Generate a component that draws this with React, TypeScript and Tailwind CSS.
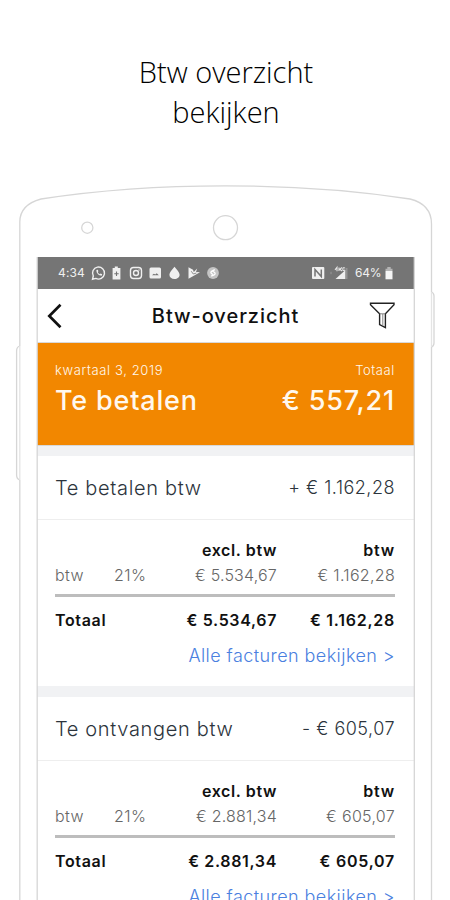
import React from 'react';

const sections = [
  {
    title: 'Te betalen btw',
    amount: '+ € 1.162,28',
    rate: '21%',
    excl: '€ 5.534,67',
    btw: '€ 1.162,28',
  },
  {
    title: 'Te ontvangen btw',
    amount: '- € 605,07',
    rate: '21%',
    excl: '€ 2.881,34',
    btw: '€ 605,07',
  },
];

const PhoneFrame = () => (
  <svg className="absolute left-0 top-0 pointer-events-none" width="450" height="900" fill="none" stroke="#d6d6d6" strokeWidth="1.3">
    <path d="M19.8 900V480M19.8 346V222C19.8 209 30 202 41 199C155 181.5 295 181.5 410 199C422 202 431.5 209 431.5 224V292M431.5 347V900" />
    <path d="M19.8 346Q16.6 347 16.6 351V475Q16.6 479 19.8 480" />
    <path d="M431.5 292Q434 293 434 296V343Q434 346 431.5 347" />
    <path d="M19.8 346V480M431.5 292V347" stroke="#e4e4e4" />
    <circle cx="87.3" cy="227.7" r="5.6" />
    <circle cx="225.5" cy="227.7" r="12" />
    <path d="M37.2 257V900M414.3 257V900" />
  </svg>
);

const StatusBar = () => (
  <div className="flex h-8 items-center justify-between bg-[#757575] pl-[21px] pr-[21px] text-[12px] text-[#f0f0f0]">
    <div className="flex items-center">
      <span className="w-[33px] tracking-[0.15px] whitespace-nowrap">4:34</span>
      <svg width="130" height="16" viewBox="0 0 130 16" fill="none" stroke="#f0f0f0" strokeWidth="1.4">
        {/* whatsapp */}
        <path d="M1.5 14.3L2.3 11A6 6 0 1 1 4.8 13.4Z" />
        <path d="M5.4 5C5.2 8 7.6 10.7 10.7 10.7L11.2 9.3L9.6 8.4L8.8 9.2C7.8 8.8 7 7.9 6.8 7L7.4 6.3L6.8 4.7Z" fill="#f0f0f0" stroke="none" />
        {/* battery saver */}
        <path d="M21.6 3H23.8V1.5H26.8V3H29.4V14.5H21.6Z" fill="#f0f0f0" stroke="none" />
        <path d="M23.3 8.8H27.7M25.5 6.6V11" stroke="#757575" strokeWidth="1.1" />
        {/* instagram */}
        <rect x="39.5" y="2.5" width="11" height="11" rx="3" />
        <circle cx="45" cy="8" r="2.5" />
        <circle cx="48" cy="5" r="0.7" fill="#f0f0f0" stroke="none" />
        {/* image */}
        <rect x="58.5" y="2.5" width="11.5" height="11" rx="1.5" fill="#f0f0f0" stroke="none" />
        <path d="M61 10.3H67.8L65.7 8.2L64.3 9.4L62.8 8.8Z" fill="#757575" stroke="none" />
        {/* drop */}
        <path d="M83.5 1.8C81 5 78.4 7.4 78.4 9.8C78.4 12.4 80.6 14 83.5 14S88.6 12.4 88.6 9.8C88.6 7.4 86 5 83.5 1.8Z" fill="#f0f0f0" stroke="none" />
        {/* play */}
        <path d="M97.5 2.2L102 4.8L102.8 7L106.2 3.6L105 7L109 7.2L97.5 13.8Z" fill="#f0f0f0" stroke="none" />
        <path d="M100.2 6.2L102.3 9L105.4 8" stroke="#757575" strokeWidth="0.8" />
        {/* shazam */}
        <circle cx="122" cy="8" r="5.9" fill="#c4c4c4" stroke="none" />
        <path d="M123.8 4.7L121 6.1Q119 7.4 120.6 8.6L122 9.5M120.2 11.2L123 9.9Q125 8.5 123.4 7.3L122 6.5" stroke="#fff" strokeWidth="1.3" />
      </svg>
    </div>
    <div className="flex items-center">
      <svg width="39" height="16" viewBox="0 0 39 16" className="mr-[5px]">
        <rect x="1" y="2" width="12.3" height="12" rx="1" fill="#f0f0f0" />
        <path d="M4 11.5V4.5L10.3 11.5V4.5" fill="none" stroke="#757575" strokeWidth="1.5" />
        <path d="M20 6.8V9.2" stroke="#999" />
        <path d="M24.5 14L34.5 5V14Z" fill="#f0f0f0" />
        <path d="M34.5 3H36.5V14H34.5Z" fill="#949494" />
        <path d="M24 4.8L26 2.3V6.2M28 2.5V6M31 2.5L28.8 4.2L31 6M34 3Q31.8 2 31.8 4.2T34 5" fill="none" stroke="#e5e5e5" strokeWidth="1.1" />
      </svg>
      <span className="w-[28px] tracking-[-0.2px] whitespace-nowrap">64%</span>
      <svg width="8" height="14" viewBox="0 0 8 14" className="ml-[2px]">
        <path d="M2.3 1H5.7V2.7H7.5V5H0.5V2.7H2.3Z" fill="#b4b4b4" />
        <path d="M0.5 5H7.5V13.3H0.5Z" fill="#f5f5f5" />
      </svg>
    </div>
  </div>
);

const BtwSection = ({ section }: { section: (typeof sections)[number] }) => (
  <section className="border-b-[11px] border-[#f1f2f4] bg-white">
    <div className="flex h-16 items-center justify-between border-b border-[#eeeeee] pl-[18px] pr-[19px] text-[#2c343c]">
      <h2 className="pt-px text-[20px] font-light tracking-[0.66px]">{section.title}</h2>
      <span className="text-[18px] font-light tracking-[0.5px]">{section.amount}</span>
    </div>

    <div className="h-[166px] pl-[18px] pr-[19px] pt-[18px] text-[16px]">
      <div className="grid grid-cols-[59px_71px_92px_118px] leading-[25px]">
        <span className="col-span-3 text-right font-semibold tracking-[0.6px] text-[#111]">excl. btw</span>
        <span className="text-right font-semibold tracking-[0.8px] text-[#111]">btw</span>
        <span className="font-light tracking-[0.4px] text-[#666]">btw</span>
        <span className="font-light tracking-[0.4px] text-[#666]">{section.rate}</span>
        <span className="text-right font-light tracking-[0.2px] text-[#666]">{section.excl}</span>
        <span className="text-right font-light tracking-[0.3px] text-[#666]">{section.btw}</span>
      </div>
      <div className="mt-[6px] h-[3px] bg-[#bdbdbd]" />
      <div className="mt-[10px] grid grid-cols-[130px_92px_118px] font-semibold leading-[26px] tracking-[0.65px] text-[#111]">
        <span>Totaal</span>
        <span className="text-right">{section.excl}</span>
        <span className="text-right tracking-[0.75px]">{section.btw}</span>
      </div>
      <div className="mt-[10px] text-right text-[18px] font-light leading-[26px] tracking-[0.43px] text-[#4a80e0]">
        Alle facturen bekijken &gt;
      </div>
    </div>
  </section>
);

const App = () => {
  return (
    <div className="relative h-[900px] w-[450px] overflow-hidden bg-white font-['Inter',sans-serif]">
      <h1 className="h-[257px] pl-[2px] pt-[52px] text-center font-['Open_Sans',sans-serif] text-[29px] font-light leading-10 text-black">
        Btw overzicht
        <br />
        bekijken
      </h1>

      <main className="ml-[37px] w-[377px]">
        <StatusBar />

        <header className="grid h-[54px] grid-cols-[60px_1fr_60px] items-center border-b border-[#d9d9d9]">
          <svg width="24" height="30" viewBox="0 0 24 30" className="ml-[8px]" fill="none" stroke="#111" strokeWidth="2.7">
            <path d="M15.5 3.8L4.3 15L15.5 26.2" />
          </svg>
          <div className="pt-px text-center text-[20px] font-medium tracking-[0.95px] text-[#111]">Btw-overzicht</div>
          <svg width="28" height="30" viewBox="0 0 28 30" className="ml-[14px]" fill="none" stroke="#222" strokeWidth="1.4">
            <path d="M2.5 2.2H26V3.8L17.4 12.8V26.5L11.6 23.5V12.8L2.5 3.8Z" />
            <path d="M11.6 12.8H17.4M14.8 13V24.8" strokeWidth="0.9" stroke="#777" />
          </svg>
        </header>

        <div className="h-[103px] border-b border-[#d8d8d8] bg-[#f28700] pl-[18px] pr-[19px] pt-[18px] text-[#fff8ee]">
          <div className="flex justify-between text-[13px] font-light leading-[18px]">
            <span className="tracking-[0.62px]">kwartaal 3, 2019</span>
            <span className="tracking-[0.6px]">Totaal</span>
          </div>
          <div className="flex justify-between text-[27px] font-medium leading-[44px] tracking-[0.8px]">
            <span>Te betalen</span>
            <span>€ 557,21</span>
          </div>
        </div>

        <div className="h-[10px] bg-[#f1f2f4]" />

        {sections.map((section) => (
          <BtwSection key={section.title} section={section} />
        ))}
      </main>

      <PhoneFrame />
    </div>
  );
};

export default App;
